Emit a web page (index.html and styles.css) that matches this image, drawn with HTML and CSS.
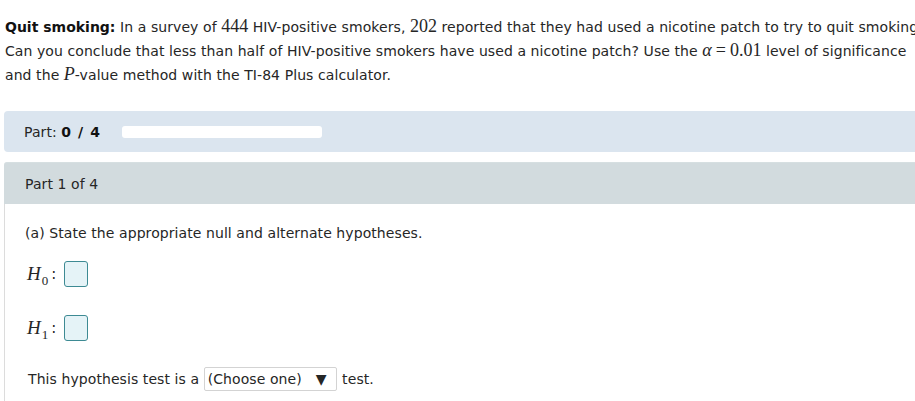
FILE: index.html
```html
<!DOCTYPE html>
<html>
<head>
<meta charset="utf-8">
<link rel="stylesheet" href="styles.css">
</head>
<body>
<div class="page">
  <p class="question"><b>Quit smoking:</b> In a survey of <span class="m">444</span> HIV-positive smokers, <span class="m">202</span> reported that they had used a nicotine patch to try to quit smoking.<br>Can you conclude that less than half of HIV-positive smokers have used a nicotine patch? Use the <span class="m"><i>α</i><span class="eq">=</span>0.01</span> level of significance<br>and the <span class="m"><i>P</i></span>-value method with the TI-84 Plus calculator.</p>

  <div class="progress">
    <span class="progress-label">Part: <b>0 / 4</b></span>
    <div class="track"></div>
  </div>

  <div class="part">
    <div class="part-head">Part 1 of 4</div>
    <div class="part-body">
      <p class="prompt">(a) State the appropriate null and alternate hypotheses.</p>
      <div class="hyp">
        <span class="m hvar"><i>H</i><sub>0</sub></span><span class="colon">:</span><span class="box"></span>
      </div>
      <div class="hyp hyp2">
        <span class="m hvar"><i>H</i><sub>1</sub></span><span class="colon">:</span><span class="box"></span>
      </div>
      <div class="test">This hypothesis test is a <span class="select">(Choose one)<span class="arrow">▼</span></span> test.</div>
    </div>
  </div>
</div>
</body>
</html>
```

FILE: styles.css
```css
html, body {
  margin: 0;
  padding: 0;
  overflow: hidden;
  background: #fff;
}
body {
  font-family: "DejaVu Sans", Verdana, sans-serif;
  font-size: 14px;
  color: #262626;
  letter-spacing: 0.08px;
}
.page {
  width: 960px;
  padding: 15px 0 0 4px;
}
.question {
  margin: 0 0 0 1px;
  line-height: 24px;
  white-space: nowrap;
}
.question b {
  color: #111;
  letter-spacing: 0;
}
.question .m {
  line-height: 1;
}
.m {
  font-family: "Liberation Serif", "Times New Roman", serif;
  font-size: 18px;
  letter-spacing: 0;
}
.m i {
  font-style: italic;
}
.eq {
  margin: 0 4px;
}
.progress {
  margin-top: 24px;
  height: 41px;
  background: #dbe5ef;
  border-radius: 4px 0 0 4px;
  display: flex;
  align-items: center;
  padding-left: 20px;
}
.progress-label b {
  color: #111;
  word-spacing: 2px;
}
.track {
  margin-left: 22px;
  width: 200px;
  height: 12px;
  background: #fff;
  border-radius: 3px;
}
.part {
  margin-top: 10px;
}
.part-head {
  height: 42px;
  background: #d2dbde;
  border-top: 1px solid #d6dfe1;
  box-sizing: border-box;
  display: flex;
  align-items: center;
  padding-left: 21px;
  border-radius: 3px 0 0 0;
}
.part-body {
  border-left: 1px solid #dcdcdc;
  padding: 17px 0 20px 20px;
}
.prompt {
  margin: 0;
  line-height: 24px;
}
.hyp {
  margin-top: 16px;
  display: flex;
  align-items: center;
  height: 26px;
}
.hyp2 {
  margin-top: 28px;
}
.hvar {
  font-size: 19px;
  margin-left: 2px;
}
.hvar sub {
  font-size: 13px;
  vertical-align: -5px;
  line-height: 0;
  margin-left: 1px;
}
.colon {
  margin-left: 3px;
  font-size: 15px;
}
.box {
  margin-left: 8px;
  width: 22px;
  height: 24px;
  border: 1px solid #3d8a93;
  border-radius: 3px;
  background: #e5f3f7;
}
.test {
  margin-top: 26px;
  margin-left: 3px;
  display: flex;
  align-items: center;
  white-space: pre;
}
.select {
  display: inline-flex;
  align-items: center;
  height: 24px;
  box-sizing: border-box;
  padding: 0 9px 0 3px;
  border: 1px solid #d3d3d3;
  border-radius: 2px;
  background: #fff;
  margin-right: 1px;
}
.arrow {
  margin-left: 14px;
  font-size: 14px;
}
```
